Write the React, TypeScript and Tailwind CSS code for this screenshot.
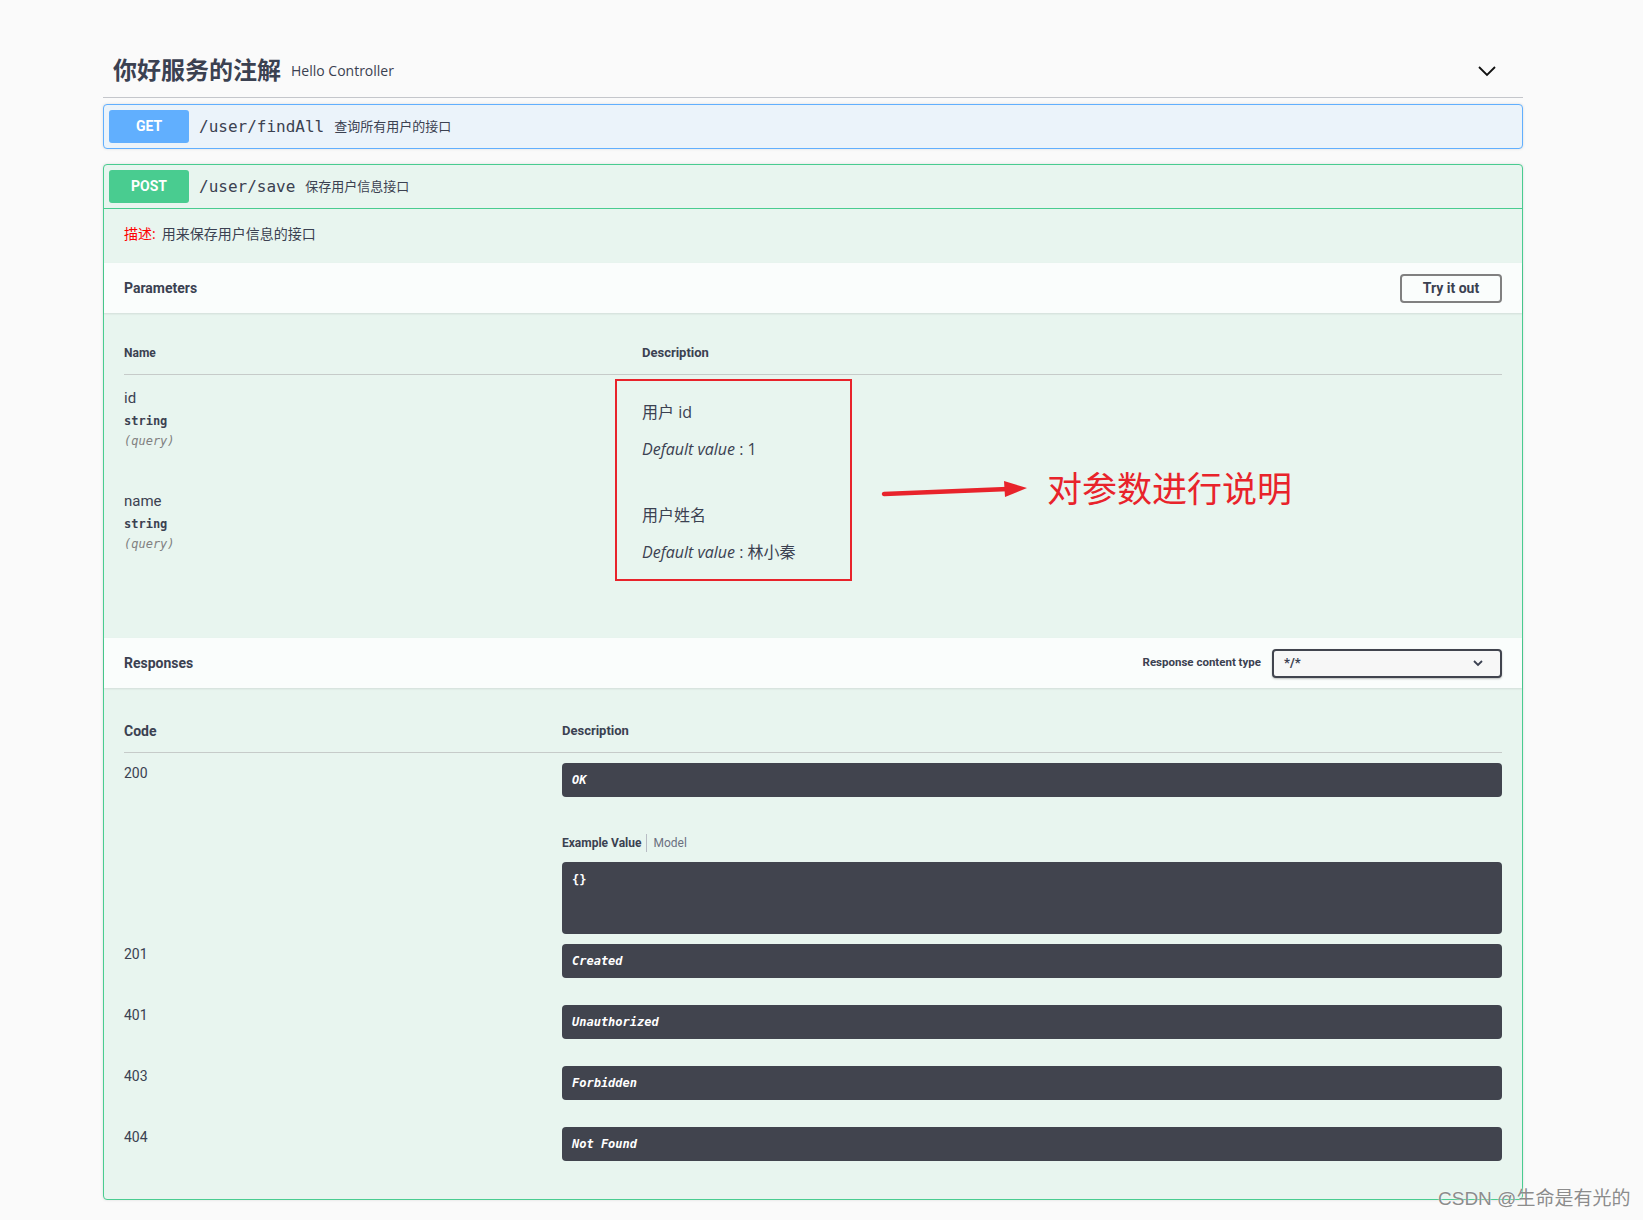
// Swagger UI: 你好服务的注解 / Hello Controller, POST /user/save expanded
const title = "font-['Roboto','Noto_Sans_CJK_SC',sans-serif]";
const sans = "font-['Open_Sans','Noto_Sans_CJK_SC',sans-serif]";
const mono = "font-['DejaVu_Sans_Mono','Noto_Sans_CJK_SC',monospace]";

const params = [
  { name: "id", desc: "用户 id", def: "1" },
  { name: "name", desc: "用户姓名", def: "林小秦" }
];

const responses = [
  { code: "201", text: "Created" },
  { code: "401", text: "Unauthorized" },
  { code: "403", text: "Forbidden" },
  { code: "404", text: "Not Found" }
];

function DarkBar({ text }: { text: string }) {
  return (
    <div
      className={`flex h-[34px] items-center rounded-[4px] bg-[#41444e] px-[10px] text-[12px] font-bold italic text-white ${mono}`}
    >
      {text}
    </div>
  );
}

export default function App() {
  return (
    <div className={`relative min-h-[1220px] bg-[#fafafa] text-[#3b4151] ${sans}`}>
      <div className="ml-[103px] w-[1420px] pt-[44px]">
        {/* 分组标题 */}
        <div className="flex h-[54px] items-center border-b border-[#c4c6cb] pl-[10px] pr-[26px]">
          <h3 className={`text-[24px] font-bold leading-none ${title}`}>你好服务的注解</h3>
          <span className="px-[10px] text-[14px]">Hello Controller</span>
          <svg className="ml-auto" width="20" height="12" viewBox="0 0 20 12">
            <path d="M2 2 L10 10 L18 2" fill="none" stroke="#111" strokeWidth="1.8" />
          </svg>
        </div>

        {/* GET */}
        <div className="mt-[6px] flex h-[45px] items-center rounded-[4px] border border-[#61affe] bg-[#ebf3fa] px-[5px] shadow-[0_0_3px_rgba(0,0,0,0.12)]">
          <span
            className={`flex h-[33px] w-[80px] items-center justify-center rounded-[3px] bg-[#61affe] text-[14px] font-bold text-white ${title}`}
          >
            GET
          </span>
          <span className={`px-[10px] text-[16px] ${mono}`}>/user/findAll</span>
          <span className="text-[13px]">查询所有用户的接口</span>
        </div>

        {/* POST */}
        <div className="mt-[15px] rounded-[4px] border border-[#49cc90] bg-[#e8f5ef] shadow-[0_0_3px_rgba(0,0,0,0.12)]">
          <div className="flex h-[44px] items-center border-b border-[#49cc90] px-[5px]">
            <span
              className={`flex h-[33px] w-[80px] items-center justify-center rounded-[3px] bg-[#49cc90] text-[14px] font-bold text-white ${title}`}
            >
              POST
            </span>
            <span className={`px-[10px] text-[16px] ${mono}`}>/user/save</span>
            <span className="text-[13px]">保存用户信息接口</span>
          </div>

          <div className="h-[54px] px-[20px] pt-[15px] text-[14px] leading-[20px]">
            <span className="text-[#ff0000]">描述:</span>
            <span className="ml-[6px]">用来保存用户信息的接口</span>
          </div>

          {/* Parameters */}
          <div className="flex h-[50px] items-center justify-between bg-[#fafdfc] px-[20px] shadow-[0_1px_2px_rgba(0,0,0,0.1)]">
            <span className={`text-[14px] font-bold ${title}`}>Parameters</span>
            <button
              className={`h-[29px] w-[102px] rounded-[4px] border-2 border-[#808080] bg-transparent text-[14px] font-bold ${title}`}
            >
              Try it out
            </button>
          </div>

          <div className="px-[20px] pb-[57px] pt-[19px]">
            <div className={`flex border-b border-[#c6cbc9] py-[12px] font-bold leading-[18px] ${title}`}>
              <div className="w-[518px] text-[12px]">Name</div>
              <div className="text-[13px]">Description</div>
            </div>
            {params.map((p) => (
              <div key={p.name} className="flex h-[103px]">
                <div className="w-[518px] pt-[11px]">
                  <div className={`text-[15px] leading-[24px] ${title}`}>{p.name}</div>
                  <div className={`mt-[1px] text-[12px] font-bold leading-[20px] ${mono}`}>string</div>
                  <div className={`text-[12px] italic leading-[20px] text-[#808080] ${mono}`}>(query)</div>
                </div>
                <div className="pt-[25px] text-[16px] leading-[24px]">
                  <div>{p.desc}</div>
                  <div className="mt-[13px]">
                    <i>Default value</i> : {p.def}
                  </div>
                </div>
              </div>
            ))}
          </div>

          {/* Responses */}
          <div className="flex h-[50px] items-center justify-between bg-[#fafdfc] px-[20px] shadow-[0_1px_2px_rgba(0,0,0,0.1)]">
            <span className={`text-[14px] font-bold ${title}`}>Responses</span>
            <div className="flex items-center gap-[11px]">
              <span className={`text-[11.5px] font-bold ${title}`}>Response content type</span>
              <div className="flex h-[29px] w-[230px] items-center justify-between rounded-[4px] border-2 border-[#41444e] bg-[#f7f7f7] px-[10px] shadow-[0_1px_2px_rgba(0,0,0,0.25)]">
                <span className={`text-[13px] font-bold ${title}`}>*/*</span>
                <svg width="12" height="8" viewBox="0 0 12 8" className="mr-[6px]">
                  <path d="M2 2 L6 6 L10 2" fill="none" stroke="#3b4151" strokeWidth="1.8" />
                </svg>
              </div>
            </div>
          </div>

          <div className="px-[20px] pb-[21px] pt-[22px]">
            <div className={`flex border-b border-[#c6cbc9] py-[12px] leading-[18px] ${title}`}>
              <div className="w-[438px] text-[14px] font-bold">Code</div>
              <div className="text-[13px] font-bold">Description</div>
            </div>

            <div className="flex">
              <div className={`w-[438px] pt-[11px] text-[14px] leading-[18px] ${title}`}>200</div>
              <div className="flex-1 pt-[10px]">
                <DarkBar text="OK" />
                <div className={`mt-[37px] flex h-[18px] items-center text-[12px] ${title}`}>
                  <span className="pr-[5px] font-bold">Example Value</span>
                  <span className="h-[18px] border-l border-[#b8bcc4]" />
                  <span className="pl-[6px] text-[#6b7080]">Model</span>
                </div>
                <div
                  className={`mt-[10px] h-[72px] rounded-[4px] bg-[#41444e] px-[10px] pt-[9px] text-[12px] font-bold text-white ${mono}`}
                >
                  {"{}"}
                </div>
              </div>
            </div>

            {responses.map((r) => (
              <div key={r.code} className="flex pb-[17px] pt-[10px]">
                <div className={`w-[438px] pt-[1px] text-[14px] leading-[18px] ${title}`}>{r.code}</div>
                <div className="flex-1">
                  <DarkBar text={r.text} />
                </div>
              </div>
            ))}
          </div>
        </div>
      </div>

      {/* 标注 */}
      <div className="absolute left-[615px] top-[379px] h-[202px] w-[237px] border-2 border-[#e8232b]" />
      <svg className="absolute left-[880px] top-[476px]" width="150" height="26" viewBox="0 0 150 26">
        <path d="M4 18 L128 13" stroke="#e8232b" strokeWidth="4.5" strokeLinecap="round" />
        <polygon points="124,5 147,12 125,21" fill="#e8232b" />
      </svg>
      <div className="absolute left-[1047px] top-[467px] font-['Noto_Sans_CJK_SC',sans-serif] text-[35px] leading-[40px] text-[#e8232b]">
        对参数进行说明
      </div>

      <div className="absolute left-[1438px] top-[1187px] font-['Liberation_Sans','Noto_Sans_CJK_SC',sans-serif] text-[19px] leading-[24px] text-[#8c8c8c] [text-shadow:0_0_2px_#ffffff]">
        CSDN @生命是有光的
      </div>
    </div>
  );
}
